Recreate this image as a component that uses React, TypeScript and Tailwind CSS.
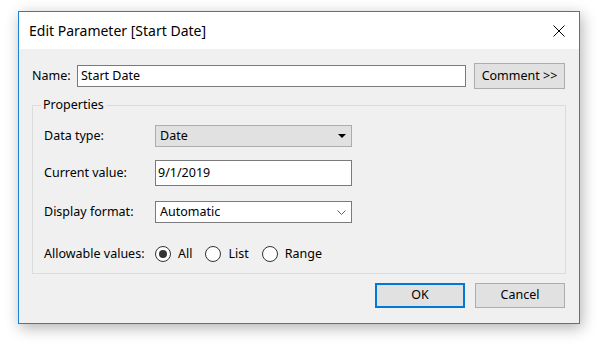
import React from "react";

function Radio({ label, checked }: { label: string; checked?: boolean }) {
  return (
    <label className="flex items-center">
      <span className="w-[16px] h-[16px] rounded-full border border-[#333] bg-white flex items-center justify-center">
        {checked && <span className="w-[8px] h-[8px] rounded-full bg-[#333]" />}
      </span>
      <span className="ml-[7px]">{label}</span>
    </label>
  );
}

export default function App() {
  return (
    <div
      className="w-[607px] h-[349px] bg-white pt-[11px] pl-[18px] text-[12.5px] text-black"
      style={{ fontFamily: '"Noto Sans", "Open Sans", sans-serif' }}
    >
      <div className="w-[562px] h-[313px] border border-[#1883d7] flex flex-col shadow-[2px_4px_14px_rgba(0,0,0,0.3)]">
        {/* Title bar */}
        <div className="h-[37px] bg-white flex items-center justify-between pl-[10px] pr-[14px]">
          <span className="text-[14px]">Edit Parameter [Start Date]</span>
          <svg width="12" height="12" viewBox="0 0 12 12">
            <path d="M0.5 0.5 L11.5 11.5 M11.5 0.5 L0.5 11.5" stroke="#000" strokeWidth="1" />
          </svg>
        </div>

        {/* Body */}
        <div className="flex-1 bg-[#f0f0f0] px-[13px] pt-[14px]">
          <div className="flex items-center h-[26px]">
            <span className="w-[45px]">Name:</span>
            <div className="w-[389px] h-[22px] border border-[#7a7a7a] bg-white pl-[3px] flex items-center">
              Start Date
            </div>
            <button className="ml-[8px] w-[91px] h-[26px] border border-[#adadad] bg-[#e1e1e1]">
              Comment &gt;&gt;
            </button>
          </div>

          {/* Properties group */}
          <div className="mt-[16px] h-[169px] border border-[#dcdcdc] pl-[11px]">
            <span className="block w-fit -mt-[9px] -ml-[3px] px-[2px] leading-[16px] bg-[#f0f0f0]">
              Properties
            </span>

            <div className="mt-[12px] flex items-center h-[22px]">
              <span className="w-[111px]">Data type:</span>
              <div className="w-[197px] h-[22px] border border-[#adadad] bg-[#e1e1e1] flex items-center justify-between pl-[4px] pr-[5px]">
                <span>Date</span>
                <svg width="8" height="4" viewBox="0 0 8 4">
                  <path d="M0 0 H8 L4 4 Z" fill="#000" />
                </svg>
              </div>
            </div>

            <div className="mt-[13px] flex items-center h-[26px]">
              <span className="w-[111px]">Current value:</span>
              <div className="w-[197px] h-[26px] border border-[#7a7a7a] bg-white flex items-center pl-[2px]">
                9/1/2019
              </div>
            </div>

            <div className="mt-[15px] flex items-center h-[22px]">
              <span className="w-[111px]">Display format:</span>
              <div className="w-[197px] h-[22px] border border-[#7a7a7a] bg-white flex items-center justify-between pl-[4px] pr-[5px]">
                <span>Automatic</span>
                <svg width="9" height="5" viewBox="0 0 9 5">
                  <path d="M0.5 0.5 L4.5 4.5 L8.5 0.5" stroke="#606060" strokeWidth="1" fill="none" />
                </svg>
              </div>
            </div>

            <div className="mt-[23px] flex items-center h-[16px]">
              <span className="w-[111px]">Allowable values:</span>
              <div className="flex items-center gap-[13px]">
                <Radio label="All" checked />
                <Radio label="List" />
                <Radio label="Range" />
              </div>
            </div>
          </div>

          {/* Buttons */}
          <div className="mt-[9px] flex justify-end gap-[10px] pr-[1px]">
            <button className="w-[90px] h-[25px] border-2 border-[#0078d7] bg-[#e1e1e1]">OK</button>
            <button className="w-[90px] h-[25px] border border-[#adadad] bg-[#e1e1e1]">Cancel</button>
          </div>
        </div>
      </div>
    </div>
  );
}
